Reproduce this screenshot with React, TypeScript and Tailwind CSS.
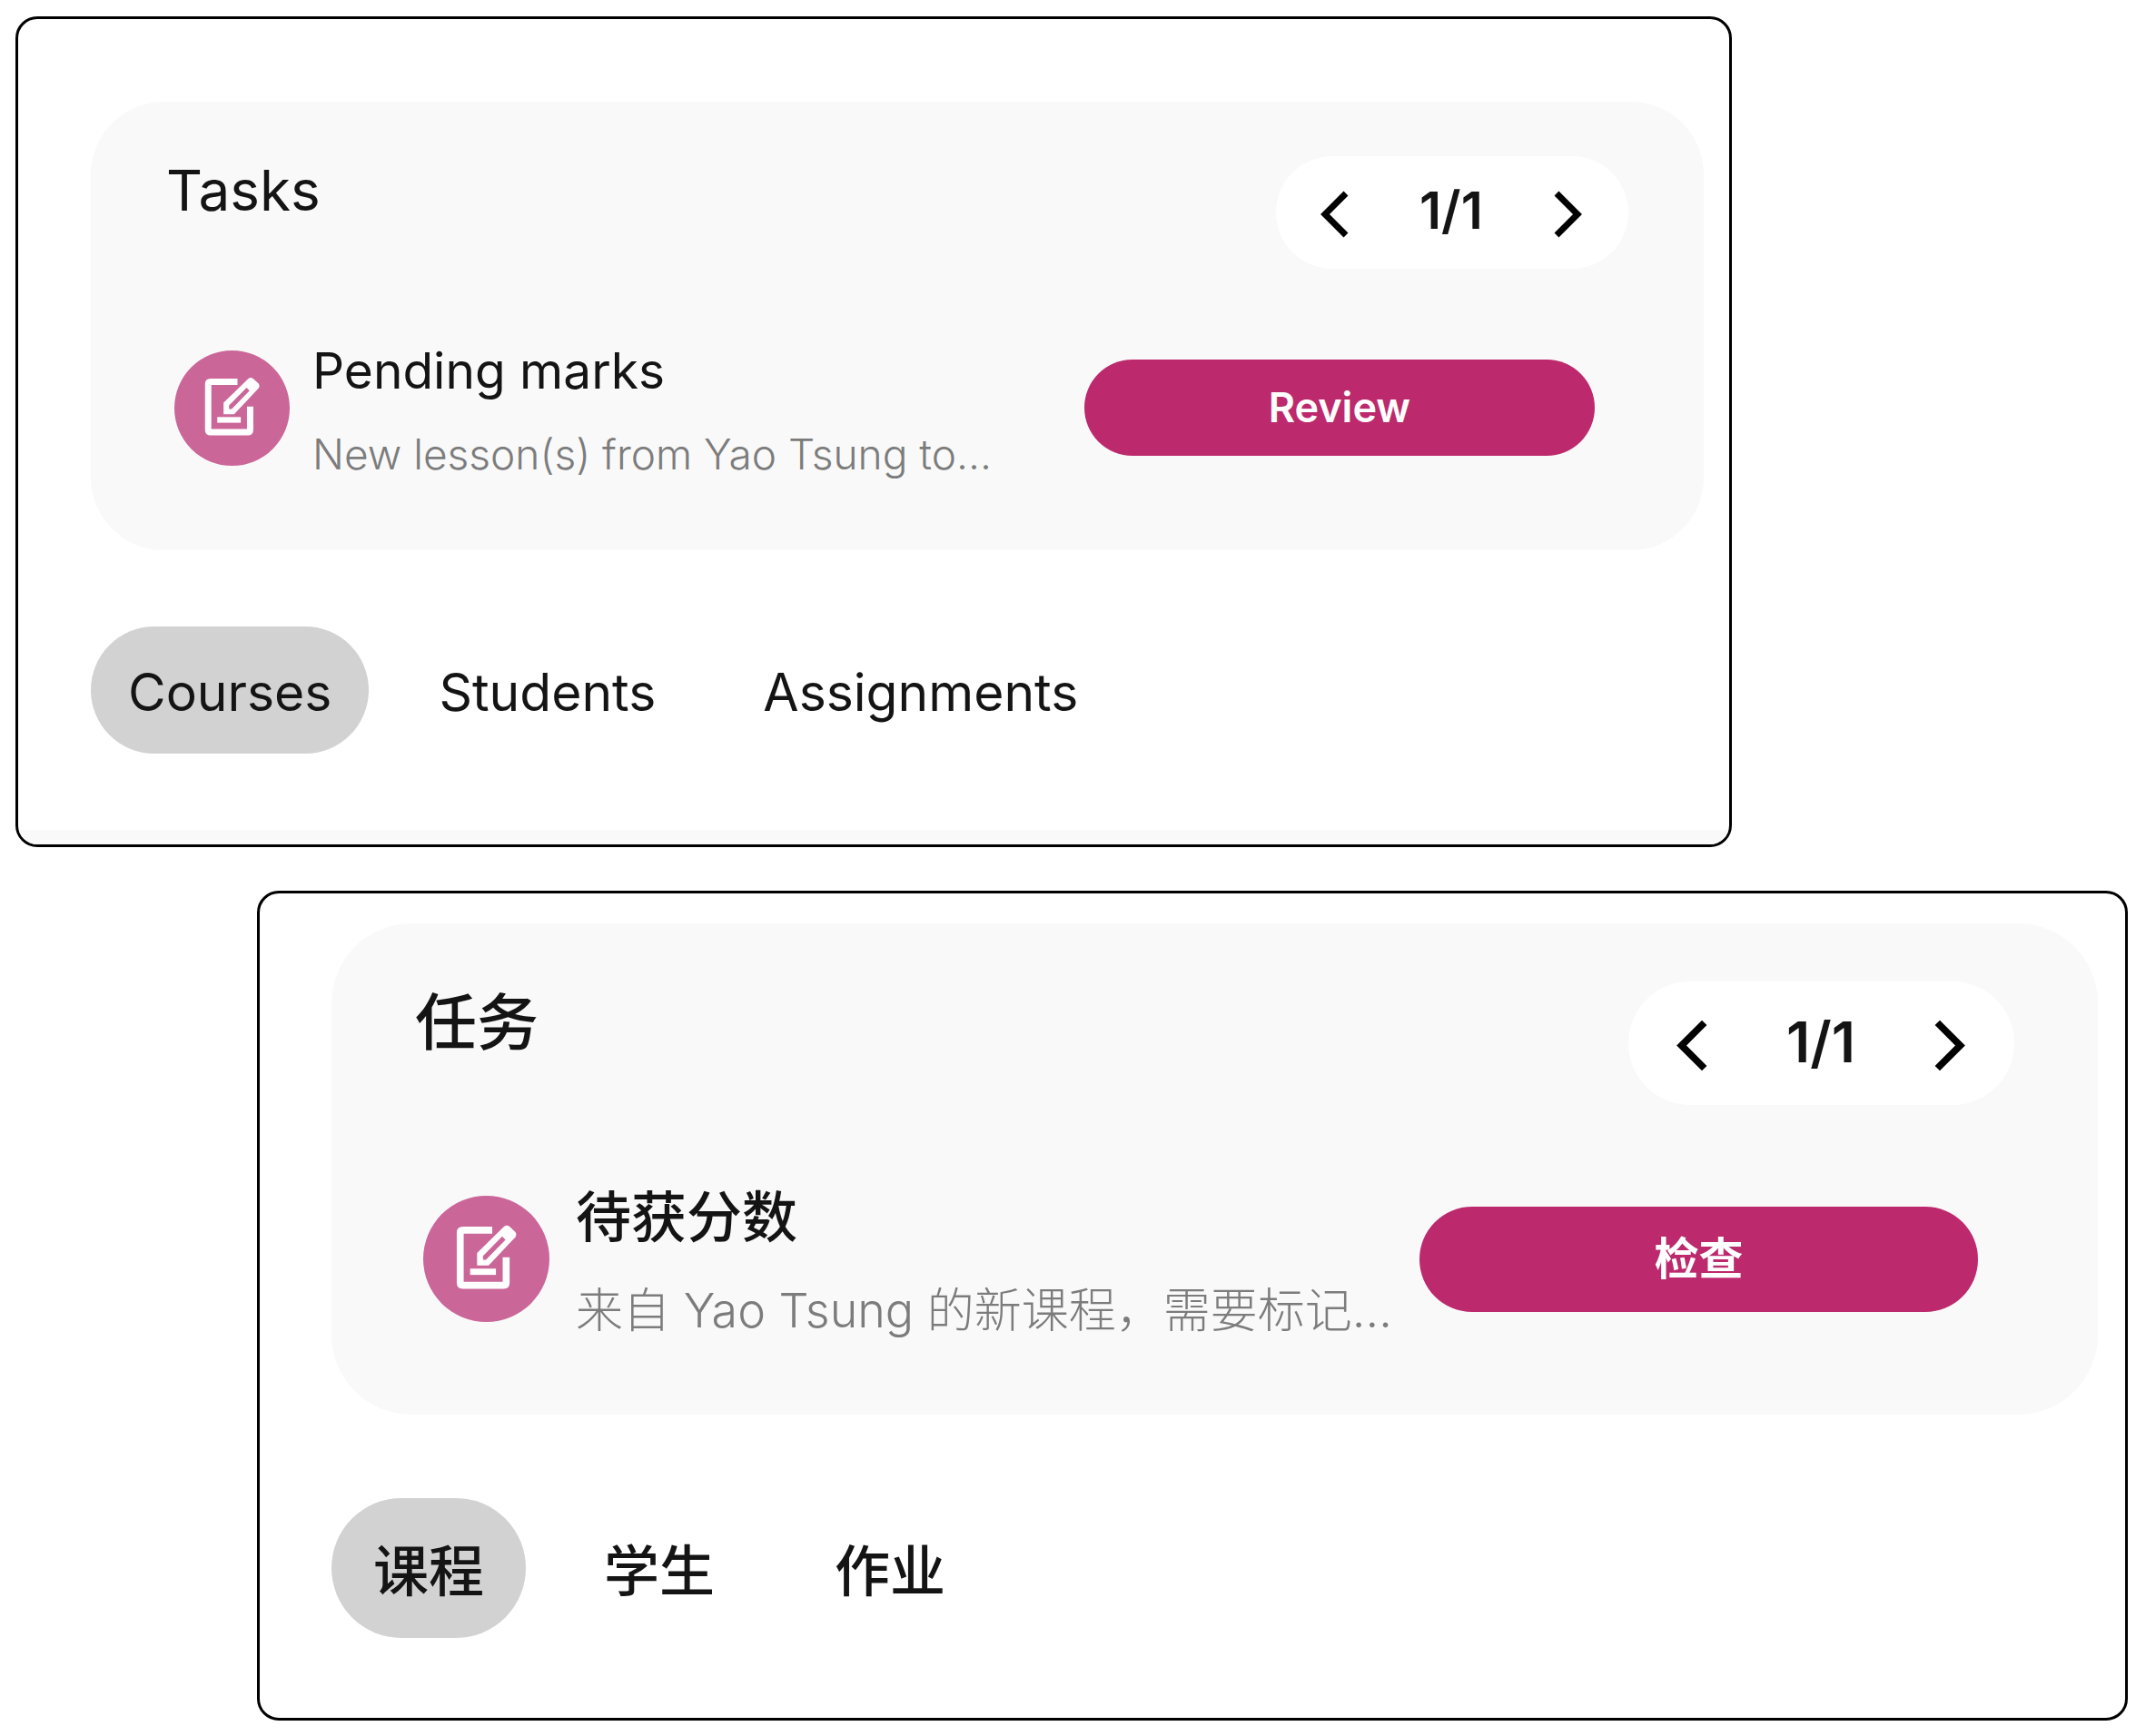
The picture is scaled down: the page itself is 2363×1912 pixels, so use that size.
import React, { useState } from 'react';

interface PanelText {
  title: string;
  page: string;
  task: string;
  detail: string;
  action: string;
  tabs: string[];
  prev: string;
  next: string;
}

interface PanelStyles {
  panel: string;
  card: string;
  title: string;
  pager: string;
  chevron: string;
  row: string;
  badge: string;
  copy: string;
  task: string;
  detail: string;
  action: string;
  tabs: string;
  tab: string;
}

const EN: PanelText = {
  title: 'Tasks',
  page: '1/1',
  task: 'Pending marks',
  detail: 'New lesson(s) from Yao Tsung to...',
  action: 'Review',
  tabs: ['Courses', 'Students', 'Assignments'],
  prev: 'Previous task',
  next: 'Next task',
};

const ZH: PanelText = {
  title: '任务',
  page: '1/1',
  task: '待获分数',
  detail: '来自 Yao Tsung 的新课程，需要标记...',
  action: '检查',
  tabs: ['课程', '学生', '作业'],
  prev: '上一个任务',
  next: '下一个任务',
};

const EN_STYLES: PanelStyles = {
  panel: 'pt-[91px] pl-20 pr-7',
  card: 'rounded-[80px] pt-[60px] pb-[78px] px-[83px]',
  title: 'text-[62px] leading-[76px] font-normal',
  pager: 'w-[388px] h-[124px] pl-12 pr-[50px] text-[57px] font-semibold',
  chevron: 'w-8 h-[52px]',
  row: 'mt-[74px] ml-[9px] mr-[37px] gap-[25px]',
  badge: 'size-[127px]',
  copy: 'pt-2 gap-[34px]',
  task: 'text-[55px] leading-[60px] font-normal',
  detail: 'text-[46px] leading-[56px] font-light',
  action: 'w-[562px] h-[106px] text-[45px] font-semibold',
  tabs: 'my-[84px] gap-9',
  tab: 'h-[140px] pt-[5px] px-[41px] text-[57px] font-normal',
};

// The Chinese panel is drawn a little larger than the English one
const ZH_STYLES: PanelStyles = {
  panel: 'pt-[33px] pl-[79px] pr-[30px]',
  card: 'rounded-[88px] pt-16 pb-[83px] px-[92px]',
  title: 'text-[68px] leading-[90px] font-medium',
  pager: 'w-[425px] h-[136px] pl-[52px] pr-[53px] text-[62px] font-semibold',
  chevron: 'w-[35px] h-[57px]',
  row: 'mt-[81px] ml-[9px] mr-10 gap-[29px]',
  badge: 'size-[139px]',
  copy: 'pt-[9px] gap-[38px]',
  task: 'text-[61px] leading-[68px] font-medium',
  detail: 'text-[52px] leading-[62px] font-light',
  action: 'w-[615px] h-[116px] text-[49px] font-bold',
  tabs: 'mt-[92px] mb-[88px] gap-10',
  tab: 'h-[154px] pt-[10px] px-[46px] text-[61px] font-medium',
};

const Chevron: React.FC<{ flip?: boolean; className: string }> = ({ flip, className }) => (
  <svg viewBox="0 0 32 52" className={className} fill="none" stroke="#000" strokeWidth="7" aria-hidden="true">
    <path d={flip ? 'M3 3L26 26L3 49' : 'M29 3L6 26L29 49'} />
  </svg>
);

const EditBadge: React.FC<{ className: string }> = ({ className }) => (
  <div className={`shrink-0 rounded-full bg-[#cb6699] text-white ${className}`}>
    <svg viewBox="36 49 382 382" className="w-full h-full" aria-hidden="true">
      {/* Sheet, open at the top right corner */}
      <path
        d="M245 153H156Q148 153 148 161V312Q148 320 156 320H279Q287 320 287 312V235"
        fill="none"
        stroke="currentColor"
        strokeWidth="21"
      />
      <path d="M178 279H256" stroke="currentColor" strokeWidth="19" />
      {/* Pencil */}
      <path
        fill="currentColor"
        fillRule="evenodd"
        d="M199 222L281 142Q289 136 297 142L315 159Q320 166 315 174L234 260H199ZM217 231V243H226L285 182L275 172Z"
      />
    </svg>
  </div>
);

interface TaskPanelProps {
  lang: string;
  text: PanelText;
  styles: PanelStyles;
  footer?: boolean;
}

const TaskPanel: React.FC<TaskPanelProps> = ({ lang, text, styles, footer }) => {
  const [active, setActive] = useState(0);

  return (
    <section lang={lang} className="overflow-hidden rounded-3xl border-3 border-black">
      <div className={styles.panel}>
        <div className={`bg-[#f9f9f9] ${styles.card}`}>
          <div className="flex items-start justify-between">
            <h2 className={styles.title}>{text.title}</h2>
            <div className={`flex items-center justify-between rounded-full bg-white ${styles.pager}`}>
              <button type="button" aria-label={text.prev} className="pt-1">
                <Chevron className={styles.chevron} />
              </button>
              <span className="pb-1">{text.page}</span>
              <button type="button" aria-label={text.next} className="pt-1">
                <Chevron flip className={styles.chevron} />
              </button>
            </div>
          </div>

          <div className={`flex items-center ${styles.row}`}>
            <EditBadge className={styles.badge} />
            <div className={`flex min-w-0 flex-1 flex-col whitespace-nowrap ${styles.copy}`}>
              <h3 className={styles.task}>{text.task}</h3>
              <p className={`text-[#7c7c7c] ${styles.detail}`}>{text.detail}</p>
            </div>
            <button type="button" className={`shrink-0 rounded-full bg-[#bc2a6d] text-white ${styles.action}`}>
              {text.action}
            </button>
          </div>
        </div>

        <div role="tablist" className={`flex ${styles.tabs}`}>
          {text.tabs.map((tab, i) => (
            <button
              key={tab}
              type="button"
              role="tab"
              aria-selected={i === active}
              onClick={() => setActive(i)}
              className={`rounded-full ${styles.tab} ${i === active ? 'bg-[#d2d2d2]' : ''}`}
            >
              {tab}
            </button>
          ))}
        </div>
      </div>
      {footer && <div className="h-4 bg-[#f9f9f9]" />}
    </section>
  );
};

export default function App() {
  return (
    <main className="flex min-h-screen flex-col gap-12 bg-white pt-[18px] pb-4 pl-[17px] pr-5 font-['Inter','Noto_Sans_CJK_SC',sans-serif] text-[#141414]">
      <div className="w-13/16">
        <TaskPanel lang="en" text={EN} styles={EN_STYLES} footer />
      </div>
      <div className="ml-[266px]">
        <TaskPanel lang="zh-CN" text={ZH} styles={ZH_STYLES} />
      </div>
    </main>
  );
}
